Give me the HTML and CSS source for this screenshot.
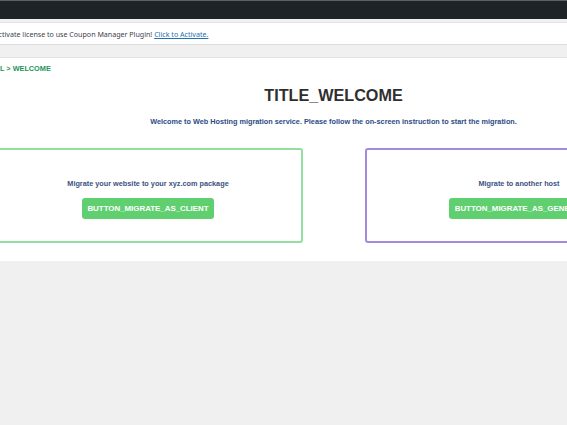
FILE: index.html
```html
<!DOCTYPE html>
<html lang="en">
<head>
    <meta charset="UTF-8">
    <meta name="viewport" content="width=device-width, initial-scale=1.0">
    <title>Web Hosting Migration</title>
    <link rel="stylesheet" href="styles.css">
</head>
<body>
    <div class="adminbar"></div>

    <div class="wrap">
        <div class="notice">
            Activate license to use Coupon Manager Plugin! <a href="#">Click to Activate.</a>
        </div>

        <div class="panel">
            <div class="crumb">L &gt; WELCOME</div>
            <h1 class="title">TITLE_WELCOME</h1>
            <p class="intro">Welcome to Web Hosting migration service. Please follow the on-screen instruction to start the migration.</p>

            <div class="cards">
                <div class="card card-client">
                    <p>Migrate your website to your xyz.com package</p>
                    <a class="btn" href="#">BUTTON_MIGRATE_AS_CLIENT</a>
                </div>
                <div class="card card-generic">
                    <p>Migrate to another host</p>
                    <a class="btn" href="#">BUTTON_MIGRATE_AS_GENERIC</a>
                </div>
            </div>
        </div>
    </div>
</body>
</html>
```

FILE: styles.css
```css
body {
    margin: 0;
    background-color: #f0f0f1;
    font-family: "Liberation Sans", Arial, sans-serif;
    overflow: hidden;
}
.adminbar {
    height: 18px;
    background-color: #1d2327;
    border-top: 1px solid #5c6166;
}
.wrap {
    width: 721px;
    margin-left: -27px;
}
.notice {
    margin-top: 3px;
    height: 21px;
    line-height: 22px;
    padding-left: 21px;
    background-color: #fff;
    border-top: 1px solid #e2e2e4;
    border-bottom: 1px solid #dcdcde;
    font-family: "Noto Sans", sans-serif;
    font-size: 7.1px;
    color: #3c434a;
}
.notice a {
    color: #2271b1;
}
.panel {
    margin-top: 12px;
    padding: 6px 20px 18px;
    background-color: #fff;
    border-top: 1px solid #e4e4e4;
    box-shadow: 0 1px 1px rgba(0, 0, 0, 0.06);
}
.crumb {
    padding-left: 7px;
    font-size: 7.3px;
    line-height: 10px;
    font-weight: bold;
    color: #23955a;
}
.title {
    margin: 11px 0 0;
    font-size: 16.2px;
    line-height: 20px;
    text-align: center;
    color: #2f2f2f;
}
.intro {
    margin: 12px 0 0;
    font-size: 7.3px;
    line-height: 10px;
    font-weight: bold;
    text-align: center;
    color: #2c4c84;
}
.cards {
    width: 680px;
    margin: 21px auto 0;
    display: flex;
    gap: 62px;
}
.card {
    flex: 1;
    height: 91px;
    box-sizing: content-box;
    border-radius: 3px;
    text-align: center;
}
.card-client {
    border: 2px solid #93df9d;
}
.card-generic {
    border: 2px solid #a48ade;
}
.card p {
    margin: 29px 0 0;
    font-size: 7.3px;
    line-height: 10px;
    font-weight: bold;
    color: #3b5282;
}
.btn {
    display: inline-block;
    margin-top: 9px;
    padding: 6px 5.5px;
    font-size: 7.9px;
    line-height: 9px;
    font-weight: bold;
    color: #fff;
    text-decoration: none;
    background-color: #60cf70;
    border-radius: 3px;
}
```
